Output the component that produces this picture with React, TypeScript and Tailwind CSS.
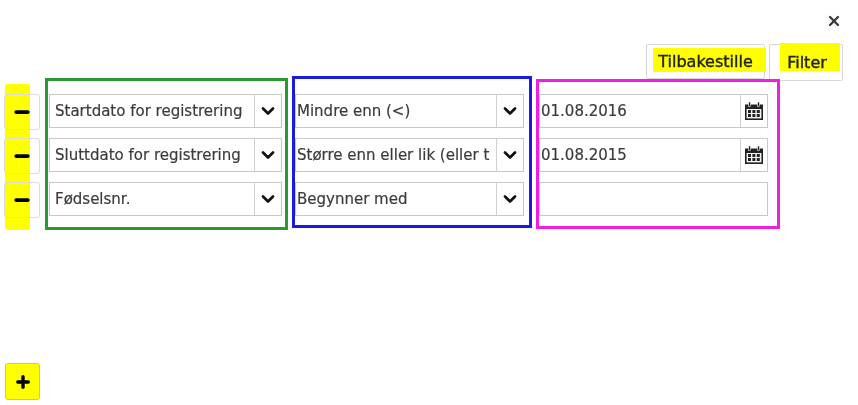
import { X, Minus, Plus, ChevronDown } from "lucide-react";

const font = "font-['DejaVu_Sans',sans-serif]";

function Cal() {
  return (
    <svg width="20" height="20" viewBox="0 0 20 20" aria-hidden="true">
      <path d="M1 3.5h18V19H1z" fill="#222" />
      <rect x="2.6" y="8" width="14.8" height="9.4" fill="#f4f4f4" />
      <rect x="4.5" y="1" width="2" height="4.5" fill="#222" stroke="#fff" strokeWidth="0.6" />
      <rect x="13.5" y="1" width="2" height="4.5" fill="#222" stroke="#fff" strokeWidth="0.6" />
      {[9, 13].map((y) =>
        [4, 8.4, 12.8].map((x) => <rect key={`${x}-${y}`} x={x} y={y} width="3" height="3" fill="#222" />)
      )}
    </svg>
  );
}

function Field({ text, cal, plain, pad }: { text: string; cal?: boolean; plain?: boolean; pad?: boolean }) {
  return (
    <div className="flex h-[34px] border border-[#c8c8c8] bg-white">
      <div
        className={`min-w-0 flex-1 overflow-hidden whitespace-nowrap text-[15px] leading-[32px] text-[#3c3c3c] [-webkit-text-stroke:0.2px_#3c3c3c] ${
          pad ? "pl-[5px]" : "pl-[1px]"
        }`}
      >
        {text}
      </div>
      {!plain && (
        <div className="flex w-[27px] shrink-0 items-center justify-center border-l border-[#d0d0d0]">
          {cal ? <Cal /> : <ChevronDown size={20} strokeWidth={3.2} className="text-[#111]" />}
        </div>
      )}
    </div>
  );
}

function MinusBtn() {
  return (
    <div className="flex h-[36px] w-[36px] items-center rounded-[3px] border border-[#dadada] pl-[7px]">
      <Minus size={20} strokeWidth={4.5} className="text-black" />
    </div>
  );
}

export default function App() {
  return (
    <div className={`${font} flex h-[405px] w-[858px] flex-col overflow-hidden bg-white blur-[0.5px]`}>
      <div className="flex h-[44px] justify-end pr-[16px] pt-[13px]">
        <X size={16} strokeWidth={3.5} className="text-[#3a3a3a]" />
      </div>
      <div className="flex justify-end gap-[4px] pr-[15px]">
        <button className="relative h-[35px] w-[119px] rounded-[2px] border border-[#d8d8d8] text-[16px] text-[#222] [-webkit-text-stroke:0.4px_#222]">
          <span className="absolute left-[6px] top-[3px] h-[24px] w-[113px] bg-[#ffff00]" />
          <span className="relative">Tilbakestille</span>
        </button>
        <button className="relative h-[37px] w-[74px] rounded-[2px] border border-[#d8d8d8] text-[16px] text-[#222] [-webkit-text-stroke:0.4px_#222]">
          <span className="absolute -top-[2px] left-[10px] h-[28px] w-[60px] bg-[#ffff00]" />
          <span className="relative left-[1px]">Filter</span>
        </button>
      </div>
      <div className="relative -mt-[5px] flex items-start pl-[4px]">
        <div className="relative mt-[3px] flex w-[41px] flex-col pt-[15px] pb-[12px]">
          <span className="absolute left-[1px] top-[5px] h-[146px] w-[25px] rounded-[3px] bg-[#ffff00]" />
          <div className="relative flex flex-col gap-[8px]">
            <MinusBtn />
            <MinusBtn />
            <MinusBtn />
          </div>
        </div>
        <div className="mt-[2px] flex h-[152px] w-[243px] flex-col gap-[10px] border-[3px] border-[#2a9a2f] pl-[1px] pr-[3px] pt-[13px]">
          <Field text="Startdato for registrering" pad />
          <Field text="Sluttdato for registrering" pad />
          <Field text="Fødselsnr." pad />
        </div>
        <div className="ml-[4px] flex h-[152px] w-[240px] flex-col gap-[10px] border-[3px] border-[#1a1ae0] pr-[5px] pt-[15px]">
          <Field text="Mindre enn (<)" />
          <Field text="Større enn eller lik (eller t" />
          <Field text="Begynner med" />
        </div>
        <div className="ml-[4px] mt-[3px] flex h-[150px] w-[244px] flex-col gap-[10px] border-[3px] border-[#f01fe0] pr-[9px] pt-[12px]">
          <Field text="01.08.2016" cal />
          <Field text="01.08.2015" cal />
          <Field text="" plain />
        </div>
      </div>
      <div className="mb-[5px] ml-[5px] mt-auto flex h-[37px] w-[35px] items-center justify-center rounded-[3px] border border-[#d6d600] bg-[#ffff00]">
        <Plus size={18} strokeWidth={4.5} className="text-black" />
      </div>
    </div>
  );
}
